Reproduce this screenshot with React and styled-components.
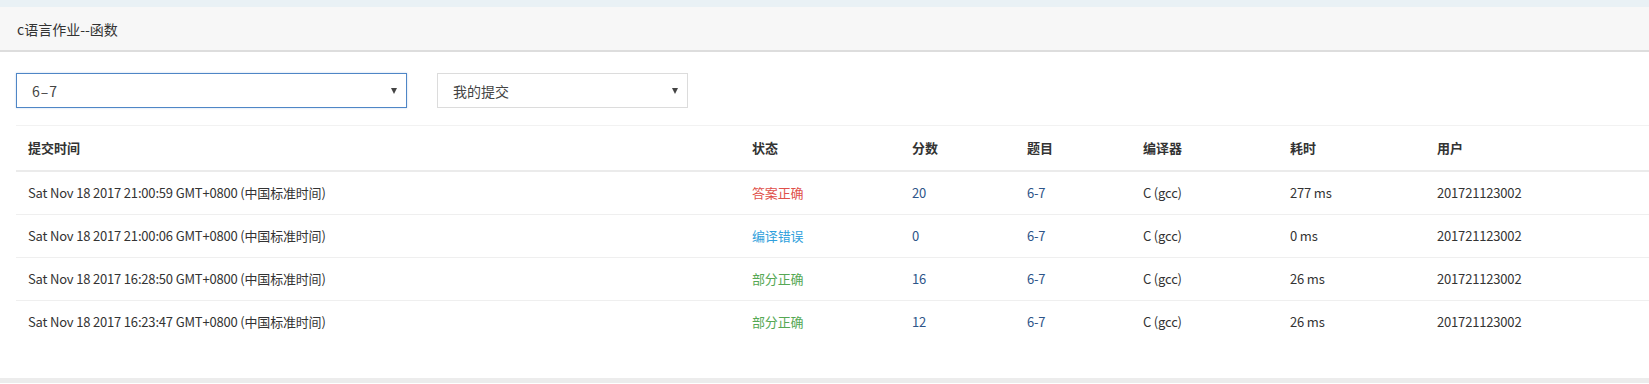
import React from 'react';
import styled, { createGlobalStyle } from 'styled-components';

const GlobalStyle = createGlobalStyle`
  body {
    margin: 0;
    background: #fff;
    font-family: "Noto Sans CJK SC", "Noto Sans", sans-serif;
    color: #333;
  }
`

const TopStrip = styled.div`
  height: 7px;
  background: #e9f1f5;
`

const PanelHeader = styled.div`
  height: 43px;
  background: #f7f7f7;
  border-bottom: 2px solid #dddddd;
  display: flex;
  align-items: center;
  padding-left: 17px;
  font-size: 14px;
  color: #333;
`

const Body = styled.div`
  padding: 21px 0 35px 16px;
`

const Filters = styled.div`
  display: flex;
  gap: 30px;
  margin-bottom: 17px;
`

const Select = styled.div`
  box-sizing: border-box;
  width: ${p => p.width}px;
  height: 35px;
  border: 1px solid ${p => p.active ? '#4f86c6' : '#dcdcdc'};
  box-shadow: ${p => p.active ? '0 0 2px rgba(79,134,198,0.35)' : 'none'};
  display: flex;
  align-items: center;
  justify-content: space-between;
  padding: 0 9px 0 15px;
  font-size: 14px;
  color: #444;
  letter-spacing: ${p => p.spaced ? '1px' : '0'};
`

const Caret = styled.span`
  width: 0;
  height: 0;
  border-left: 3.5px solid transparent;
  border-right: 3.5px solid transparent;
  border-top: 6px solid #444;
`

const Table = styled.table`
  width: 100%;
  table-layout: fixed;
  border-collapse: collapse;
  border-top: 1px solid #f2f2f2;
  font-size: 13px;
`

const Th = styled.th`
  box-sizing: border-box;
  width: ${p => p.width ? p.width + 'px' : 'auto'};
  text-align: left;
  font-weight: bold;
  padding: 12px 12px;
  line-height: 20px;
  border-bottom: 2px solid #ebebeb;
  color: #333;
`

const Td = styled.td`
  padding: 11px 12px;
  line-height: 20px;
  letter-spacing: -0.18px;
  color: ${p => p.color || '#333'};
  white-space: nowrap;
`

const Row = styled.tr`
  & + & td {
    border-top: 1px solid #efefef;
  }
`

const Footer = styled.div`
  height: 5px;
  background: #ececec;
`

const statusColors = {
  '答案正确': '#e0504a',
  '编译错误': '#2f9fdc',
  '部分正确': '#55a854',
}

const columns = [
  { title: '提交时间', width: 724 },
  { title: '状态', width: 160 },
  { title: '分数', width: 115 },
  { title: '题目', width: 116 },
  { title: '编译器', width: 147 },
  { title: '耗时', width: 147 },
  { title: '用户' },
]

const submissions = [
  { time: 'Sat Nov 18 2017 21:00:59 GMT+0800 (中国标准时间)', status: '答案正确', score: 20, problem: '6-7', compiler: 'C (gcc)', cost: '277 ms', user: '201721123002' },
  { time: 'Sat Nov 18 2017 21:00:06 GMT+0800 (中国标准时间)', status: '编译错误', score: 0, problem: '6-7', compiler: 'C (gcc)', cost: '0 ms', user: '201721123002' },
  { time: 'Sat Nov 18 2017 16:28:50 GMT+0800 (中国标准时间)', status: '部分正确', score: 16, problem: '6-7', compiler: 'C (gcc)', cost: '26 ms', user: '201721123002' },
  { time: 'Sat Nov 18 2017 16:23:47 GMT+0800 (中国标准时间)', status: '部分正确', score: 12, problem: '6-7', compiler: 'C (gcc)', cost: '26 ms', user: '201721123002' },
]

const App = () => {
  return (
    <>
      <GlobalStyle />
      <TopStrip />
      <PanelHeader>c语言作业--函数</PanelHeader>
      <Body>
        <Filters>
          <Select width={391} active spaced>6–7<Caret /></Select>
          <Select width={251}>我的提交<Caret /></Select>
        </Filters>
        <Table>
          <thead>
            <tr>
              {columns.map(c => <Th key={c.title} width={c.width}>{c.title}</Th>)}
            </tr>
          </thead>
          <tbody>
            {submissions.map(s => (
              <Row key={s.time}>
                <Td>{s.time}</Td>
                <Td color={statusColors[s.status]}>{s.status}</Td>
                <Td color="#2d5589">{s.score}</Td>
                <Td color="#2d5589">{s.problem}</Td>
                <Td>{s.compiler}</Td>
                <Td>{s.cost}</Td>
                <Td>{s.user}</Td>
              </Row>
            ))}
          </tbody>
        </Table>
      </Body>
      <Footer />
    </>
  );
}

export default App;
